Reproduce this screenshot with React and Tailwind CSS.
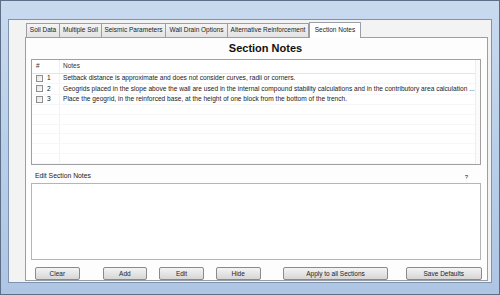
import React from "react";

const tabs = [
  ["Soil Data", "w-[34px]"],
  ["Multiple Soil", "w-[43px]"],
  ["Seismic Parameters", "w-[65px]"],
  ["Wall Drain Options", "w-[63px]"],
  ["Alternative Reinforcement", "w-[82px]"],
];
const notes = [
  "Setback distance is approximate and does not consider curves, radii or corners.",
  "Geogrids placed in the slope above the wall are used in the internal compound stability calculations and in the contributory area calculation ...",
  "Place the geogrid, in the reinforced base, at the height of one block from the bottom of the trench.",
];

function Btn({ label, w }) {
  return (
    <div
      className={`h-[13px] ${w} flex items-center justify-center rounded-[2px] border border-[#8a8a8a] bg-gradient-to-b from-[#f4f4f4] to-[#d6d6d6] text-[6.5px] text-[#222]`}
    >
      {label}
    </div>
  );
}

export default function App() {
  return (
    <div
      className="w-[500px] h-[295px] bg-white"
      style={{ fontFamily: '"Liberation Sans", Arial, sans-serif' }}
    >
      <div className="w-[500px] h-[295px] border border-[#5d6f86] bg-gradient-to-b from-[#c9daef] via-[#b9cfe9] to-[#aec6e4] pt-[18px] pl-[7px] pr-[7px] pb-[11px] flex flex-col">
        <div className="flex-1 border border-[#7e93ad] bg-[#f3f3f3] flex flex-col pt-[1px]">
          {/* tabs */}
          <div className="flex items-end pl-[17px] h-[16px]">
            {tabs.map(([t, w]) => (
              <div
                key={t}
                className={`h-[14px] ${w} -mr-[1px] border border-[#9a9ea6] border-b-0 bg-gradient-to-b from-[#f4f4f4] to-[#e3e3e3] text-[6.5px] text-[#222] flex items-center justify-center leading-none whitespace-nowrap`}
              >
                {t}
              </div>
            ))}
            <div className="h-[16px] w-[52px] ml-[1px] border border-[#9a9ea6] border-b-0 bg-white text-[6.5px] text-[#222] flex items-center justify-center leading-none relative top-[1px] z-10">
              Section Notes
            </div>
          </div>
          {/* panel */}
          <div className="ml-[16px] mr-[3px] h-[244px] border border-[#9a9ea6] bg-[#fdfdfd] flex flex-col px-[5px]">
            <div className="h-[21px] flex items-center justify-center pl-[18px] font-bold text-[11px] text-[#111]">
              Section Notes
            </div>
            {/* grid */}
            <div className="h-[106px] mr-[1px] border border-[#a0a0a0] bg-white flex">
              <div className="flex-1 flex flex-col">
                <div className="h-[14px] flex items-center border-b border-[#e4e4e4] text-[6.5px] text-[#333]">
                  <div className="w-[28px] pl-[4px] border-r border-[#f0f0f0] h-full flex items-center">#</div>
                  <div className="pl-[3px]">Notes</div>
                </div>
                {notes.map((n, i) => (
                  <div key={i} className="h-[10.5px] flex items-center text-[6.6px] text-[#222] border-b border-[#f6f6f6]">
                    <div className="w-[28px] h-full flex items-center pl-[4px] gap-[4px] border-r border-[#f3f3f3]">
                      <div className="w-[7px] h-[7px] border border-[#8f8f8f] bg-gradient-to-br from-[#e6e6e6] to-[#fafafa]" />
                      <span>{i + 1}</span>
                    </div>
                    <div className="pl-[3px] whitespace-nowrap">{n}</div>
                  </div>
                ))}
                {[0, 1, 2, 3, 4, 5].map((i) => (
                  <div key={i} className="h-[10px] flex border-b border-[#f7f7f7]">
                    <div className="w-[28px] h-full border-r border-[#f3f3f3]" />
                  </div>
                ))}
              </div>
              <div className="w-[7px] border-l border-[#eeeeee] bg-[#fbfbfb]" />
            </div>
            {/* edit label */}
            <div className="h-[18px] flex items-end justify-between pb-[1px] pl-[4px] pr-[14px] text-[6.8px] text-[#222]">
              <span>Edit Section Notes</span>
              <span className="text-[6px]">?</span>
            </div>
            <div className="h-[78px] mr-[1px] border border-[#b5b5b5] bg-white" />
            {/* buttons */}
            <div className="flex items-center mt-[7px] pl-[4px]">
              <Btn label="Clear" w="w-[45px]" />
              <div className="w-[23px]" />
              <Btn label="Add" w="w-[45px]" />
              <div className="w-[12px]" />
              <Btn label="Edit" w="w-[45px]" />
              <div className="w-[12px]" />
              <Btn label="Hide" w="w-[45px]" />
              <div className="w-[23px]" />
              <Btn label="Apply to all Sections" w="w-[105px]" />
              <div className="w-[18px]" />
              <Btn label="Save Defaults" w="w-[77px]" />
            </div>
          </div>
        </div>
      </div>
    </div>
  );
}
